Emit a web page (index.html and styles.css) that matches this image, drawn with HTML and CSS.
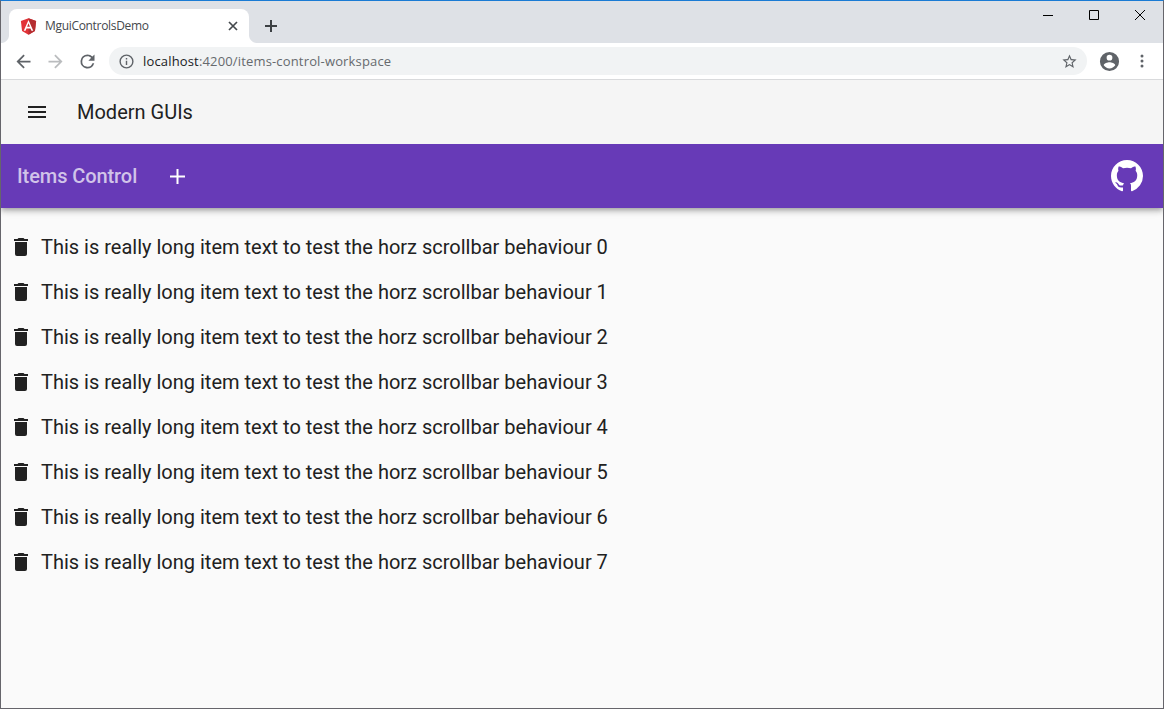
FILE: index.html
```html
<!DOCTYPE html>
<html lang="en">
<head>
<meta charset="utf-8">
<title>MguiControlsDemo</title>
<link rel="stylesheet" href="styles.css">
</head>
<body>
<div class="window">
  <div class="tabstrip">
    <div class="tab">
      <svg class="favicon" viewBox="0 0 250 250"><path fill="#e23237" d="M125 5 13 45l17 148 95 52 95-52 17-148z"/><path fill="#b52e31" d="M125 5v240l95-52 17-148z"/><path fill="#fff" d="M125 30 55 188h27l14-35h58l14 35h27zm21 99h-42l21-51z"/></svg>
      <span class="tab-title">MguiControlsDemo</span>
      <svg class="tab-close" viewBox="0 0 10 10"><path d="M1 1l8 8M9 1L1 9"/></svg>
    </div>
    <svg class="new-tab" viewBox="0 0 12 12"><path d="M6 0v12M0 6h12"/></svg>
    <div class="controls">
      <svg viewBox="0 0 11 11"><path d="M0 5.500h10"/></svg>
      <svg viewBox="0 0 11 11"><path d="M.5 .5h9v9h-9z"/></svg>
      <svg viewBox="0 0 11 11"><path d="M0 0l10 10M10 0l-10 10"/></svg>
    </div>
  </div>
  <div class="toolbar">
    <svg class="nav back" viewBox="0 0 24 24"><path d="M20 11H7.830l5.590-5.590L12 4l-8 8 8 8 1.410-1.410L7.830 13H20z"/></svg>
    <svg class="nav forward" viewBox="0 0 24 24"><path d="M12 4l-1.410 1.410L16.170 11H4v2h12.170l-5.580 5.590L12 20l8-8z"/></svg>
    <svg class="nav reload" viewBox="0 0 24 24"><path d="M17.650 6.350A7.960 7.960 0 0 0 12 4a8 8 0 1 0 7.730 10h-2.080A6 6 0 1 1 12 6c1.660 0 3.140.690 4.220 1.780L13 11h7V4z"/></svg>
    <div class="address">
      <svg class="info" viewBox="0 0 24 24"><path d="M11 17h2v-6h-2zm1-15a10 10 0 1 0 0 20 10 10 0 0 0 0-20zm0 18a8 8 0 1 1 0-16 8 8 0 0 1 0 16zM11 9h2V7h-2z"/></svg>
      <span class="url"><span class="host">localhost</span>:4200/items-control-workspace</span>
      <svg class="star" viewBox="0 0 24 24"><path d="M22 9.240l-7.190-.620L12 2 9.190 8.630 2 9.240l5.460 4.730L5.820 21 12 17.270 18.180 21l-1.630-7.030zM12 15.400l-3.760 2.270 1-4.280-3.320-2.880 4.380-.380L12 6.100l1.710 4.040 4.380.380-3.320 2.880 1 4.280z"/></svg>
    </div>
    <svg class="profile" viewBox="0 0 24 24"><path d="M12 2a10 10 0 1 0 0 20 10 10 0 0 0 0-20zm0 3a3 3 0 1 1 0 6 3 3 0 0 1 0-6zm0 14.200a7.200 7.200 0 0 1-6-3.220c.030-1.990 4-3.080 6-3.080 1.990 0 5.970 1.090 6 3.080a7.200 7.200 0 0 1-6 3.220z"/></svg>
    <svg class="more" viewBox="0 0 4 14"><circle cx="2" cy="2" r="1.500"/><circle cx="2" cy="7" r="1.500"/><circle cx="2" cy="12" r="1.500"/></svg>
  </div>
  <header class="app-bar">
    <svg class="menu" viewBox="0 0 24 24"><path d="M3 18h18v-2H3zm0-5h18v-2H3zm0-7v2h18V6z"/></svg>
    <span class="app-title">Modern GUIs</span>
  </header>
  <nav class="section-bar">
    <span class="section-title">Items Control</span>
    <svg class="add" viewBox="0 0 15 15"><path d="M15 8.500H8.500V15h-2V8.500H0v-2h6.500V0h2v6.500H15z"/></svg>
    <svg class="github" viewBox="0 0 16 16"><path d="M8 0C3.580 0 0 3.580 0 8c0 3.540 2.290 6.530 5.470 7.590.4.070.550-.170.550-.380 0-.190-.010-.820-.010-1.490-2.010.370-2.530-.490-2.690-.940-.090-.230-.480-.940-.820-1.130-.280-.150-.680-.520-.010-.530.630-.010 1.080.580 1.230.820.720 1.210 1.870.870 2.330.660.070-.520.280-.870.510-1.070-1.780-.2-3.640-.890-3.640-3.950 0-.870.310-1.590.820-2.150-.080-.2-.360-1.020.080-2.120 0 0 .670-.210 2.200.820a7.600 7.600 0 0 1 4 0c1.530-1.040 2.200-.820 2.200-.820.440 1.100.160 1.920.080 2.120.510.560.820 1.270.820 2.150 0 3.070-1.870 3.750-3.650 3.950.290.250.540.730.540 1.480 0 1.070-.010 1.930-.010 2.200 0 .210.150.460.550.380A8.010 8.010 0 0 0 16 8c0-4.420-3.580-8-8-8z"/></svg>
  </nav>
  <main class="items">
    <div class="item"><svg viewBox="0 0 24 24"><path d="M6 19a2 2 0 0 0 2 2h8a2 2 0 0 0 2-2V7H6zM19 4h-3.500l-1-1h-5l-1 1H5v2h14z"/></svg><span>This is really long item text to test the horz scrollbar behaviour 0</span></div>
    <div class="item"><svg viewBox="0 0 24 24"><path d="M6 19a2 2 0 0 0 2 2h8a2 2 0 0 0 2-2V7H6zM19 4h-3.500l-1-1h-5l-1 1H5v2h14z"/></svg><span>This is really long item text to test the horz scrollbar behaviour 1</span></div>
    <div class="item"><svg viewBox="0 0 24 24"><path d="M6 19a2 2 0 0 0 2 2h8a2 2 0 0 0 2-2V7H6zM19 4h-3.500l-1-1h-5l-1 1H5v2h14z"/></svg><span>This is really long item text to test the horz scrollbar behaviour 2</span></div>
    <div class="item"><svg viewBox="0 0 24 24"><path d="M6 19a2 2 0 0 0 2 2h8a2 2 0 0 0 2-2V7H6zM19 4h-3.500l-1-1h-5l-1 1H5v2h14z"/></svg><span>This is really long item text to test the horz scrollbar behaviour 3</span></div>
    <div class="item"><svg viewBox="0 0 24 24"><path d="M6 19a2 2 0 0 0 2 2h8a2 2 0 0 0 2-2V7H6zM19 4h-3.500l-1-1h-5l-1 1H5v2h14z"/></svg><span>This is really long item text to test the horz scrollbar behaviour 4</span></div>
    <div class="item"><svg viewBox="0 0 24 24"><path d="M6 19a2 2 0 0 0 2 2h8a2 2 0 0 0 2-2V7H6zM19 4h-3.500l-1-1h-5l-1 1H5v2h14z"/></svg><span>This is really long item text to test the horz scrollbar behaviour 5</span></div>
    <div class="item"><svg viewBox="0 0 24 24"><path d="M6 19a2 2 0 0 0 2 2h8a2 2 0 0 0 2-2V7H6zM19 4h-3.500l-1-1h-5l-1 1H5v2h14z"/></svg><span>This is really long item text to test the horz scrollbar behaviour 6</span></div>
    <div class="item"><svg viewBox="0 0 24 24"><path d="M6 19a2 2 0 0 0 2 2h8a2 2 0 0 0 2-2V7H6zM19 4h-3.500l-1-1h-5l-1 1H5v2h14z"/></svg><span>This is really long item text to test the horz scrollbar behaviour 7</span></div>
  </main>
</div>
</body>
</html>
```
FILE: styles.css
```css
* { box-sizing: border-box; }
body { margin: 0; font-family: Roboto, sans-serif; color: #212121; }
svg { display: block; flex: none; }
span { white-space: nowrap; }

.window {
  display: flex;
  flex-direction: column;
  height: 709px;
  border: 1px solid #66656b;
  border-top-color: #1a7bd4;
  background: #fafafa;
  overflow: hidden;
}

.tabstrip {
  display: flex;
  height: 42px;
  padding: 8px 0 0 8px;
  background: #dee1e6;
}
.tab {
  display: flex;
  align-items: center;
  width: 240px;
  height: 34px;
  padding: 0 11px 0 12px;
  border-radius: 8px 8px 0 0;
  background: #fff;
  position: relative;
}
.tab::before, .tab::after {
  content: "";
  position: absolute;
  bottom: 0;
  width: 8px;
  height: 8px;
}
.tab::before { left: -8px; background: radial-gradient(circle at 0 0, transparent 7.5px, #fff 8.5px); }
.tab::after { right: -8px; background: radial-gradient(circle at 100% 0, transparent 7.5px, #fff 8.5px); }
.favicon { width: 17px; height: 17px; margin: 0 8px 0 -1px; }
.tab-title {
  flex: 1;
  font: 12px/16px "Open Sans", sans-serif;
  letter-spacing: -0.32px;
  color: #45484c;
}
.tab-close { width: 10px; height: 10px; fill: none; stroke: #45494d; stroke-width: 1.7; }
.new-tab { width: 12px; height: 12px; margin: 11px 0 0 16px; fill: none; stroke: #3c4043; stroke-width: 2; }
.controls { display: flex; gap: 35px; margin: 1px 17px 0 auto; }
.controls svg { width: 11px; height: 11px; fill: none; stroke: #000; stroke-width: 1; }

.toolbar {
  display: flex;
  align-items: center;
  height: 37px;
  padding-left: 12px;
  border-bottom: 1px solid #d9dadc;
  background: #fff;
  fill: #5f6368;
}
.nav { width: 21px; height: 21px; margin-right: 11px; }
.forward { fill: #babcbe; }
.address {
  display: flex;
  align-items: center;
  width: 978px;
  height: 28px;
  padding: 0 9px;
  border-radius: 14px;
  background: #f1f3f4;
}
.info { width: 17px; height: 17px; margin-right: 8px; }
.url { flex: 1; font: 13px/20px "Open Sans", sans-serif; letter-spacing: 0.16px; color: #666a6e; }
.host { color: #202124; }
.star { width: 17px; height: 17px; }
.profile { width: 23px; height: 23px; margin-left: 11px; }
.more { width: 4px; height: 14px; margin-left: 19px; }

.app-bar {
  display: flex;
  align-items: center;
  height: 64px;
  padding-left: 24px;
  background: #f5f5f5;
  font-size: 20px;
  position: relative;
  z-index: 1;
}
.menu { width: 24px; height: 24px; margin-right: 28px; fill: #212121; }

.section-bar {
  display: flex;
  align-items: center;
  height: 64px;
  padding: 0 20px 0 16px;
  background: #673ab7;
  box-shadow: 0 2px 4px -1px rgba(0,0,0,.2), 0 4px 5px rgba(0,0,0,.14), 0 1px 10px rgba(0,0,0,.12);
  font-size: 20px;
  font-weight: 500;
  position: relative;
}
.section-title { color: #d1c4e9; letter-spacing: -0.08px; }
.add { width: 15px; height: 15px; margin-left: 33px; fill: #fff; }
.github { width: 32px; height: 32px; margin-left: auto; fill: #fff; }

.items { padding: 17px 8px; font-size: 20px; }
.item { display: flex; align-items: center; height: 44px; margin-bottom: 1px; gap: 8px; }
.item svg { width: 24px; height: 24px; fill: #212121; }
```
